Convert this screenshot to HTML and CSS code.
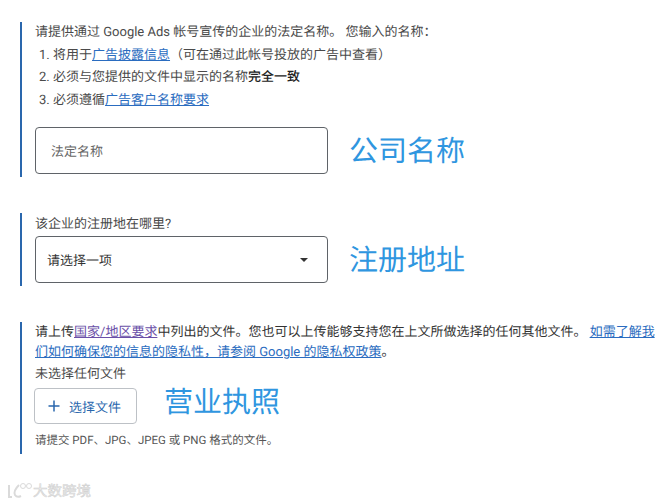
FILE: index.html
```html
<!DOCTYPE html>
<html lang="zh-CN">

<head>
	<meta charset="UTF-8">
	<meta name="viewport" content="width=device-width, initial-scale=1.0">
	<title>法定名称</title>
	<link rel="stylesheet" href="styles.css">
</head>

<body>
	<section class="block block-name">
		<p class="intro">请提供通过 Google Ads 帐号宣传的企业的法定名称。 您输入的名称：</p>
		<ol class="rules">
			<li>将用于<a href="#">广告披露信息</a>（可在通过此帐号投放的广告中查看）</li>
			<li>必须与您提供的文件中显示的名称<b>完全一致</b></li>
			<li>必须遵循<a href="#">广告客户名称要求</a></li>
		</ol>
		<div class="field-row">
			<div class="box box-input">法定名称</div>
			<span class="note">公司名称</span>
		</div>
	</section>

	<section class="block block-place">
		<p class="question">该企业的注册地在哪里?</p>
		<div class="field-row">
			<div class="box box-select">
				<span>请选择一项</span>
				<span class="arrow"></span>
			</div>
			<span class="note">注册地址</span>
		</div>
	</section>

	<section class="block block-file">
		<p class="upload-text">请上传<a href="#" class="visited">国家/地区要求</a>中列出的文件。您也可以上传能够支持您在上文所做选择的任何其他文件。 <a href="#">如需了解我们如何确保您的信息的隐私性，请参阅 Google 的隐私权政策</a>。</p>
		<p class="no-file">未选择任何文件</p>
		<div class="upload-row">
			<div class="upload-btn">
				<svg class="plus" width="12" height="12" viewBox="0 0 12 12"><path d="M6 0.5v11M0.5 6h11" stroke="#2a67ad" stroke-width="1.5" fill="none"/></svg>
				<span>选择文件</span>
			</div>
			<span class="note">营业执照</span>
		</div>
		<p class="hint">请提交 PDF、JPG、JPEG 或 PNG 格式的文件。</p>
	</section>

	<div class="watermark">
		<svg width="26" height="18" viewBox="0 0 26 18"><path d="M2 3v12h3M12 3Q6 9 8 13q2 3 6 1" stroke="#dadada" stroke-width="2" fill="none"/><circle cx="16" cy="4" r="2.5" stroke="#dadada" fill="none"/><circle cx="22" cy="4" r="2.5" stroke="#dadada" fill="none"/></svg>
		<span>大数跨境</span>
	</div>
</body>

</html>
```

FILE: styles.css
```css
body {
	margin: 0;
	background: #fff;
	color: #4a4a4a;
	font-family: Roboto, "Noto Sans CJK SC", sans-serif;
	font-size: 13px;
	text-rendering: geometricPrecision;
	overflow: hidden;
}

p {
	margin: 0;
}

a {
	color: #2a6cc0;
	text-decoration: underline;
}

a.visited {
	color: #6a4fa8;
}

.block {
	margin-left: 20px;
	border-left: 2px solid #2a67ad;
	padding-left: 13px;
}

.block-name {
	margin-top: 22px;
	height: 155px;
}

.block-place {
	margin-top: 36px;
	height: 73px;
}

.block-file {
	margin-top: 36px;
	height: 132px;
}

.intro {
	padding-top: 1px;
	line-height: 20px;
}

.rules {
	margin: 0;
	padding: 0 0 0 18px;
}

.rules li {
	margin-top: 2.5px;
	line-height: 20px;
}

.rules b {
	color: #222;
	font-weight: 500;
}

.field-row {
	display: flex;
	align-items: center;
}

.block-name .field-row {
	margin-top: 16.5px;
}

.box {
	box-sizing: border-box;
	width: 293px;
	height: 47px;
	border: 1px solid #5f6368;
	border-radius: 4px;
	display: flex;
	align-items: center;
}

.box-input {
	padding-left: 15px;
	color: #666;
}

.box-select {
	padding: 0 19px 0 11px;
	justify-content: space-between;
	color: #333;
}

.arrow {
	width: 0;
	height: 0;
	border-left: 4px solid transparent;
	border-right: 4px solid transparent;
	border-top: 4px solid #333;
}

.note {
	margin-left: 21px;
	padding-top: 3px;
	color: #2f96e0;
	font-size: 29px;
	line-height: 36px;
}

.question {
	padding-top: 2px;
	line-height: 20px;
	margin-bottom: 1px;
}

.upload-text {
	padding-top: 1px;
	color: #333;
	line-height: 20px;
	width: 623px;
}

.no-file {
	margin-top: 2px;
	line-height: 20px;
}

.upload-row {
	display: flex;
	align-items: center;
	margin-top: 3px;
}

.upload-btn {
	box-sizing: border-box;
	width: 103px;
	height: 36px;
	margin-left: -1px;
	border: 1px solid #bdc1c6;
	border-radius: 4px;
	display: flex;
	align-items: center;
	padding-left: 13px;
	gap: 9px;
	color: #2a67ad;
}

.upload-btn + .note {
	align-self: flex-start;
	margin-left: 27px;
	padding-top: 0;
	line-height: 30px;
}

.hint {
	margin-top: 8px;
	font-size: 11.5px;
	line-height: 16px;
	color: #555;
}

.watermark {
	position: absolute;
	left: 7px;
	top: 480px;
	display: flex;
	align-items: center;
	color: #f2f2f2;
	-webkit-text-stroke: 0.5px #cfcfcf;
	font-size: 14.5px;
}
```
